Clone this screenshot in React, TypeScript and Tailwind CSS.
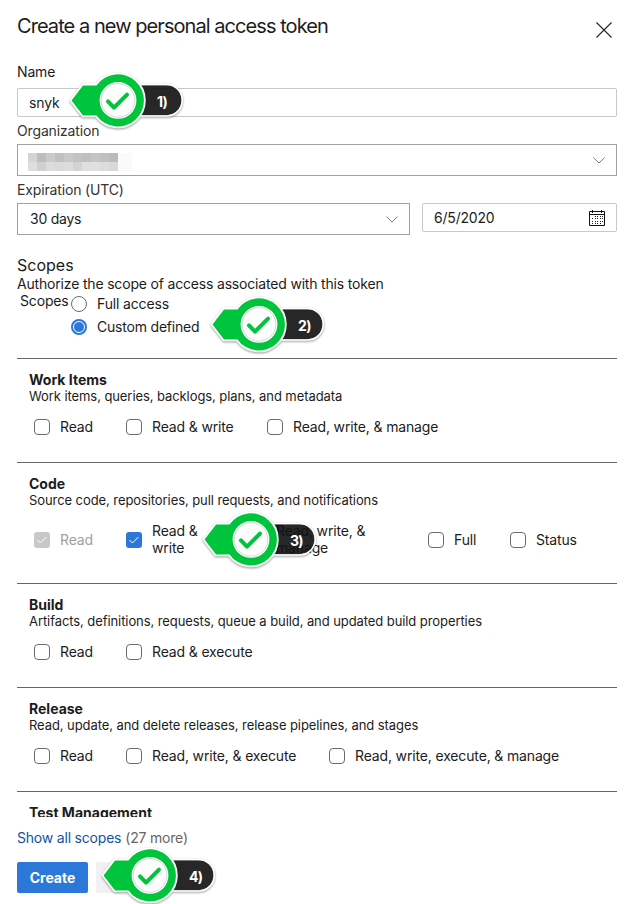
import React from "react";

type Scope = { label: React.ReactNode; cell: string; checked?: boolean; disabled?: boolean };

function Chevron() {
  return (
    <svg width="12" height="7" viewBox="0 0 12 7" fill="none" stroke="#7c7c7c" strokeWidth="1">
      <path d="M0.4 0.6 L6 6 L11.6 0.6" />
    </svg>
  );
}

const DOT_X = [3, 6, 8, 11, 13];
const DOT_Y = [6, 8, 11, 13];

function Calendar() {
  return (
    <svg width="16" height="16" viewBox="0 0 16 16" fill="none" stroke="#111" strokeWidth="1">
      <path d="M0.5 1.5h15v14h-15zM0.5 4.5h15M3.5 0v3M12.5 0v3" />
      <g stroke="none" fill="#222">
        {DOT_Y.map((y, r) =>
          DOT_X.map((x, c) =>
            (r === 0 && c === 0) || (r === 3 && c === 4) ? null : <rect key={`${r}-${c}`} x={x} y={y} width="1" height="1" />
          )
        )}
      </g>
    </svg>
  );
}

function Checkbox({ checked, disabled }: { checked?: boolean; disabled?: boolean }) {
  if (!checked) return <span className="h-4 w-4 shrink-0 rounded-[4px] border border-[#6b6b6b] bg-white" />;
  return (
    <span className={`flex h-4 w-4 shrink-0 items-center justify-center rounded-[3px] ${disabled ? "bg-[#c8c8c8]" : "bg-[#2b78d8]"}`}>
      <svg width="10" height="8" viewBox="0 0 10 8" fill="none" stroke="#fff" strokeWidth="1">
        <path d="M0.5 4 L3.4 7 L9.4 1" />
      </svg>
    </span>
  );
}

function Section({ title, text, scopes, height, rowClass }: {
  title: string; text: string; scopes: Scope[]; height: string; rowClass: string;
}) {
  return (
    <section className={`border-t border-[#666] pt-3 pl-3 ${height}`}>
      <h3 className="text-[14px] leading-[17px] font-bold tracking-[0px]">{title}</h3>
      <p className="text-[13px] leading-4 tracking-[-0.08px] whitespace-nowrap">{text}</p>
      <div className={`flex items-center pl-[5px] ${rowClass}`}>
        {scopes.map((s, i) => (
          <label key={i} className={`flex shrink-0 items-center gap-[10px] whitespace-nowrap ${s.cell} ${s.disabled ? "text-[#a0a0a0]" : ""}`}>
            <Checkbox checked={s.checked} disabled={s.disabled} />
            <span>{s.label}</span>
          </label>
        ))}
      </div>
    </section>
  );
}

function Marker({ n, place }: { n: number; place: string }) {
  return (
    <div className={`absolute h-[64px] w-[124px] ${place}`}>
      <svg width="124" height="64" viewBox="-54 -32.4 124 64" className="overflow-visible drop-shadow-[0_1.5px_1px_rgba(0,0,0,0.4)]">
        <path d="M20 -15.2H48.5A15 15 0 0 1 48.5 14.8H20Z" fill="#111" fillOpacity="0.86" />
        <path d="M22 -16H48.5A15.8 15.8 0 0 1 48.5 15.6H22" fill="none" stroke="#fff" strokeWidth="1.6" />
        <path d="M-46.5 0L-35 -15H-21.5A26.1 26.1 0 1 1 -21.5 15H-35ZM-18 0A18 18 0 1 0 18 0A18 18 0 1 0 -18 0Z" fill="none" stroke="#fff" strokeWidth="3.6" strokeLinejoin="round" />
        <circle r="18.4" fill="#fff" fillOpacity="0.97" />
        <path fillRule="evenodd" d="M-46.5 0L-35 -15H-21.5A26.1 26.1 0 1 1 -21.5 15H-35ZM-18.4 0A18.4 18.4 0 1 0 18.4 0A18.4 18.4 0 1 0 -18.4 0Z" fill="#00c53c" />
        <circle r="16.8" fill="none" stroke="#ccc" strokeWidth="0.8" />
        <path d="M-10 1L-4 7.2L9 -5.8" fill="none" stroke="#00c53c" strokeWidth="4" strokeLinecap="round" strokeLinejoin="round" />
      </svg>
      <span className="absolute top-[25px] left-[93px] text-[14px] leading-[17px] font-bold text-white tracking-[-0.7px]">{n})</span>
    </div>
  );
}

const MOSAIC_TOP = ["#d4d4d4", "#bdbdbd", "#cacaca", "#c0c0c0", "#c8c8c8", "#c3c3c3", "#bfbfbf", "#c5c5c5", "#c0c0c0", "#bababa"];
const MOSAIC_BOTTOM = ["#dedede", "#d0d0d0", "#dcdcdc", "#dadada", "#dddddd", "#d3d3d3", "#dfdfdf", "#e0e0e0", "#dcdcdc", "#d8d8d8"];

export default function App() {
  return (
    <main className="relative h-[904px] w-[636px] overflow-hidden bg-white pl-[17px] pr-[19px] font-['Inter','Liberation_Sans',sans-serif] text-[14px] leading-[17px] tracking-[-0.15px] text-[#1c1c1c]">
      <header className="flex h-[63px] justify-between pt-[14px]">
        <h1 className="text-[20px] leading-6 tracking-[-0.94px]">Create a new personal access token</h1>
        <svg className="mt-2 mr-[5px]" width="16" height="16" viewBox="0 0 16 16" stroke="#222" strokeWidth="1.1">
          <path d="M0.5 0.5L15.5 15.5M15.5 0.5L0.5 15.5" />
        </svg>
      </header>

      <div className="h-[25px]">Name</div>
      <div className="flex h-[29px] items-center rounded-[2px] border border-[#c8c8c8] pl-[11px]">snyk</div>

      <div className="flex h-[27px] items-center text-[#333]">Organization</div>
      <div className="flex h-8 items-center justify-between border border-[#a0a0a0] pr-[11px] pl-[10px]">
        <div className="flex flex-col pt-1">
          {[MOSAIC_TOP, MOSAIC_BOTTOM].map((row, r) => (
            <div key={r} className="flex h-[9px]">
              {row.map((c, i) => (
                <span key={i} className="w-[9px]" style={{ backgroundColor: c }} />
              ))}
              <span className="w-[14px] bg-[#fafafa]" />
            </div>
          ))}
        </div>
        <Chevron />
      </div>

      <div className="flex h-[27px] items-center text-[#333]">Expiration (UTC)</div>
      <div className="flex gap-3">
        <div className="flex h-8 w-[393px] items-center justify-between border border-[#a0a0a0] pr-[11px] pl-3">
          <span className="pb-[2px] tracking-[-0.25px]">30 days</span>
          <Chevron />
        </div>
        <div className="flex h-[29px] flex-1 items-center justify-between rounded-[2px] border border-[#c8c8c8] pr-[11px] pl-[11px]">
          <span className="tracking-[-0.2px]">6/5/2020</span>
          <Calendar />
        </div>
      </div>

      <h2 className="mt-5 h-5 text-[16px] leading-[21px] tracking-[0px]">Scopes</h2>
      <p className="leading-[17px] tracking-[-0.18px]">Authorize the scope of access associated with this token</p>
      <div className="flex h-[66px]">
        <span className="w-[54px] pl-[3px]">Scopes</span>
        <div className="flex flex-col gap-[7px] pt-1">
          <label className="flex h-4 items-center gap-[10px]">
            <span className="h-4 w-4 rounded-full border border-[#6b6b6b]" />
            <span className="pb-[2px]">Full access</span>
          </label>
          <label className="flex h-4 items-center gap-[10px]">
            <span className="flex h-4 w-4 items-center justify-center rounded-full bg-[#2b78d8]">
              <span className="h-3 w-3 rounded-full border border-white" />
            </span>
            <span className="pb-[2px] tracking-[-0.2px]">Custom defined</span>
          </label>
        </div>
      </div>

      <div className="h-[459px] overflow-hidden">
        <Section title="Work Items" text="Work items, queries, backlogs, plans, and metadata" height="h-[104px]" rowClass="h-[45px]"
          scopes={[{ label: "Read", cell: "w-[92px]" }, { label: "Read & write", cell: "w-[141px]" }, { label: "Read, write, & manage", cell: "" }]} />
        <Section title="Code" text="Source code, repositories, pull requests, and notifications" height="h-[121px]" rowClass="h-[63px]"
          scopes={[
            { label: "Read", cell: "w-[92px]", checked: true, disabled: true },
            { label: <>Read &amp;<br />write</>, cell: "w-[124px] [&>span:last-child]:pb-[2px]", checked: true },
            { label: <>Read, write, &amp;<br />manage</>, cell: "w-[178px] [&>span:last-child]:pb-[2px]" },
            { label: "Full", cell: "w-[82px]" },
            { label: "Status", cell: "" },
          ]} />
        <Section title="Build" text="Artifacts, definitions, requests, queue a build, and updated build properties" height="h-[104px]" rowClass="h-[45px]"
          scopes={[{ label: "Read", cell: "w-[92px]" }, { label: "Read & execute", cell: "" }]} />
        <Section title="Release" text="Read, update, and delete releases, release pipelines, and stages" height="h-[104px]" rowClass="h-[45px]"
          scopes={[{ label: "Read", cell: "w-[92px]" }, { label: "Read, write, & execute", cell: "w-[203px]" }, { label: "Read, write, execute, & manage", cell: "" }]} />
        <Section title="Test Management" text="" height="h-[104px]" rowClass="h-[45px]" scopes={[]} />
      </div>

      <div className="flex h-[45px] gap-1 pt-3 tracking-[-0.2px]">
        <a className="text-[#10559e]">Show all scopes</a>
        <span className="text-[#666]">(27 more)</span>
      </div>
      <div className="flex gap-2">
        <button className="h-[31px] w-[71px] rounded-[2px] bg-[#2b78d8] font-bold tracking-[0px] text-white">Create</button>
        <span className="h-[31px] w-[40px] rounded-[2px] bg-[#f1f1f1]" />
      </div>

      <Marker n={1} place="left-[64px] top-[68px]" />
      <Marker n={2} place="left-[205px] top-[292px]" />
      <Marker n={3} place="left-[197px] top-[507px]" />
      <Marker n={4} place="left-[96px] top-[843px]" />
    </main>
  );
}
